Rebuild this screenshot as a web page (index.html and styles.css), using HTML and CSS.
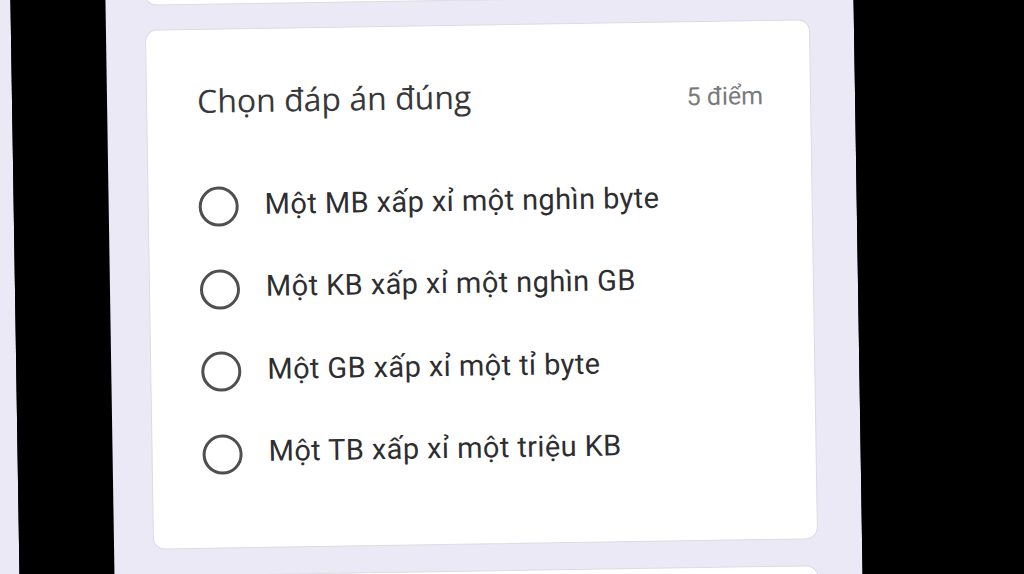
FILE: index.html
```html
<!DOCTYPE html>
<html lang="vi">
<head>
<meta charset="utf-8">
<title>Chọn đáp án đúng</title>
<link rel="stylesheet" href="styles.css">
</head>
<body>
	<div class="frame">
		<div class="edge"></div>
		<div class="bezel"></div>

		<main class="form">
			<div class="card card-prev"></div>

			<!-- câu hỏi trắc nghiệm -->
			<section class="card question">
				<header class="question-head">
					<h2 class="question-title">Chọn đáp án đúng</h2>
					<span class="question-points">5 điểm</span>
				</header>
				<ul class="options">
					<li class="option"><span class="radio"></span><span class="option-label">Một MB xấp xỉ một nghìn byte</span></li>
					<li class="option"><span class="radio"></span><span class="option-label">Một KB xấp xỉ một nghìn GB</span></li>
					<li class="option"><span class="radio"></span><span class="option-label">Một GB xấp xỉ một tỉ byte</span></li>
					<li class="option"><span class="radio"></span><span class="option-label">Một TB xấp xỉ một triệu KB</span></li>
				</ul>
			</section>

			<div class="card card-next"></div>
		</main>

		<div class="bezel bezel-right"></div>
	</div>
</body>
</html>
```

FILE: styles.css
```css
html, body {
	margin: 0;
	height: 100%;
	overflow: hidden;
	background: #000;
}

/* khung ảnh chụp hơi nghiêng */
.frame {
	display: flex;
	width: calc(100% + 80px);
	height: 694px;
	margin: -60px -40px;
	transform: rotate(-0.9deg);
}

.edge {
	width: 55px;
	flex-shrink: 0;
	background: #ece9f6;
}

.bezel {
	width: 95px;
	flex-shrink: 0;
	background: #000;
}

.bezel-right {
	flex: 1;
}

.form {
	width: 748px;
	flex-shrink: 0;
	box-sizing: border-box;
	padding: 0 44px 0 39px;
	background: #ece9f6;
	display: flex;
	flex-direction: column;
	gap: 19px;
}

.card {
	background: #fff;
	border: 1px solid #dcdbe2;
	border-radius: 12px;
	flex-shrink: 0;
}

.card-prev {
	height: 58px;
	border-top-left-radius: 0;
	border-top-right-radius: 0;
}

.card-next {
	height: 80px;
	margin-top: 7px;
}

.question {
	height: 520px;
	margin-top: 5px;
	box-sizing: border-box;
	padding: 49px 47px 0 50px;
}

.question-head {
	display: flex;
	justify-content: space-between;
	align-items: baseline;
}

.question-title {
	margin: 0;
	font-family: "Open Sans", "Noto Sans", sans-serif;
	font-weight: 400;
	font-size: 32px;
	line-height: 44px;
	color: #38383b;
}

.question-points {
	font-family: Roboto, "Noto Sans", sans-serif;
	font-size: 25px;
	color: #7a7a7e;
}

.options {
	list-style: none;
	margin: 43px 0 0 0;
	padding: 0;
}

.option {
	display: flex;
	align-items: center;
	gap: 26px;
	height: 82.5px;
}

.radio {
	width: 40px;
	height: 40px;
	box-sizing: border-box;
	border: 3.5px solid #4f4f52;
	border-radius: 50%;
	flex-shrink: 0;
}

.option-label {
	font-family: Roboto, "Noto Sans", sans-serif;
	font-size: 29px;
	letter-spacing: 0.4px;
	color: #2e2e30;
	margin-top: -5px;
}
```
